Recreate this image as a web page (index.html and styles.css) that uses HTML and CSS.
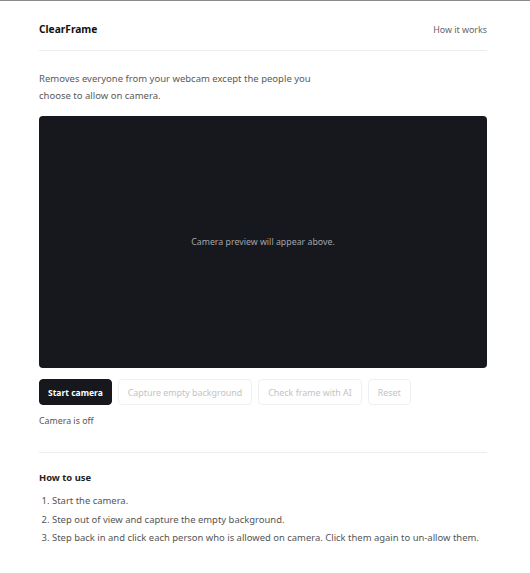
FILE: index.html
```html
<!DOCTYPE html>
<html lang="en">
<head>
    <meta charset="UTF-8">
    <meta name="viewport" content="width=device-width, initial-scale=1.0">
    <title>ClearFrame</title>
    <link rel="stylesheet" href="styles.css">
</head>
<body>
    <div class="page">
        <header class="topbar">
            <div class="logo">ClearFrame</div>
            <a class="top-link" href="#how">How it works</a>
        </header>

        <p class="intro">Removes everyone from your webcam except the people you<br>choose to allow on camera.</p>

        <div class="stage">
            <span class="stage-hint">Camera preview will appear above.</span>
        </div>

        <div class="controls">
            <button class="btn btn-primary" type="button">Start camera</button>
            <button class="btn" type="button" disabled>Capture empty background</button>
            <button class="btn" type="button" disabled>Check frame with AI</button>
            <button class="btn" type="button" disabled>Reset</button>
        </div>
        <p class="status">Camera is off</p>

        <section class="howto" id="how">
            <h2>How to use</h2>
            <ol>
                <li>Start the camera.</li>
                <li>Step out of view and capture the empty background.</li>
                <li>Step back in and click each person who is allowed on camera. Click them again to un-allow them.</li>
            </ol>
        </section>
    </div>
</body>
</html>
```

FILE: styles.css
```css
body {
    margin: 0;
    background: #fff;
    color: #222;
    font-family: "Noto Sans", "Open Sans", sans-serif;
    border-top: 1px solid #8a8a8a;
}

.page {
    width: 448px;
    margin: 0 0 0 39px;
}

.topbar {
    display: flex;
    justify-content: space-between;
    align-items: center;
    height: 42px;
    padding-top: 7px;
    border-bottom: 1px solid #ececec;
}

.topbar .logo {
    font-size: 10.2px;
    font-weight: 700;
    color: #111;
}

.top-link {
    font-size: 8.9px;
    color: #666;
    text-decoration: none;
}

.intro {
    margin: 19px 0 12px;
    font-size: 9.5px;
    line-height: 17px;
    color: #5a5a5a;
}

.stage {
    height: 252px;
    background: #16181d;
    border-radius: 4px;
    display: flex;
    align-items: center;
    justify-content: center;
}

.stage-hint {
    font-size: 8.8px;
    color: #a3a6ab;
}

.controls {
    display: flex;
    gap: 6px;
    margin-top: 11px;
}

.btn {
    height: 26px;
    padding: 0 9px;
    font-family: inherit;
    font-size: 8.9px;
    color: #c3c3c3;
    background: #fff;
    border: 1px solid #f0f0f0;
    border-radius: 4px;
}

.btn-primary {
    padding: 0 8px;
    color: #fff;
    font-weight: 700;
    font-size: 8.5px;
    background: #16181d;
    border-color: #16181d;
    cursor: pointer;
}

.status {
    margin: 10px 0 0;
    font-size: 8.8px;
    color: #555;
}

.howto {
    margin-top: 25px;
    border-top: 1px solid #ececec;
    padding-top: 18px;
}

.howto h2 {
    margin: 0 0 8px;
    font-size: 9.4px;
    font-weight: 700;
    color: #222;
}

.howto ol {
    margin: 0;
    padding-left: 13px;
    font-size: 9.45px;
    line-height: 18.5px;
    color: #555;
}
```
